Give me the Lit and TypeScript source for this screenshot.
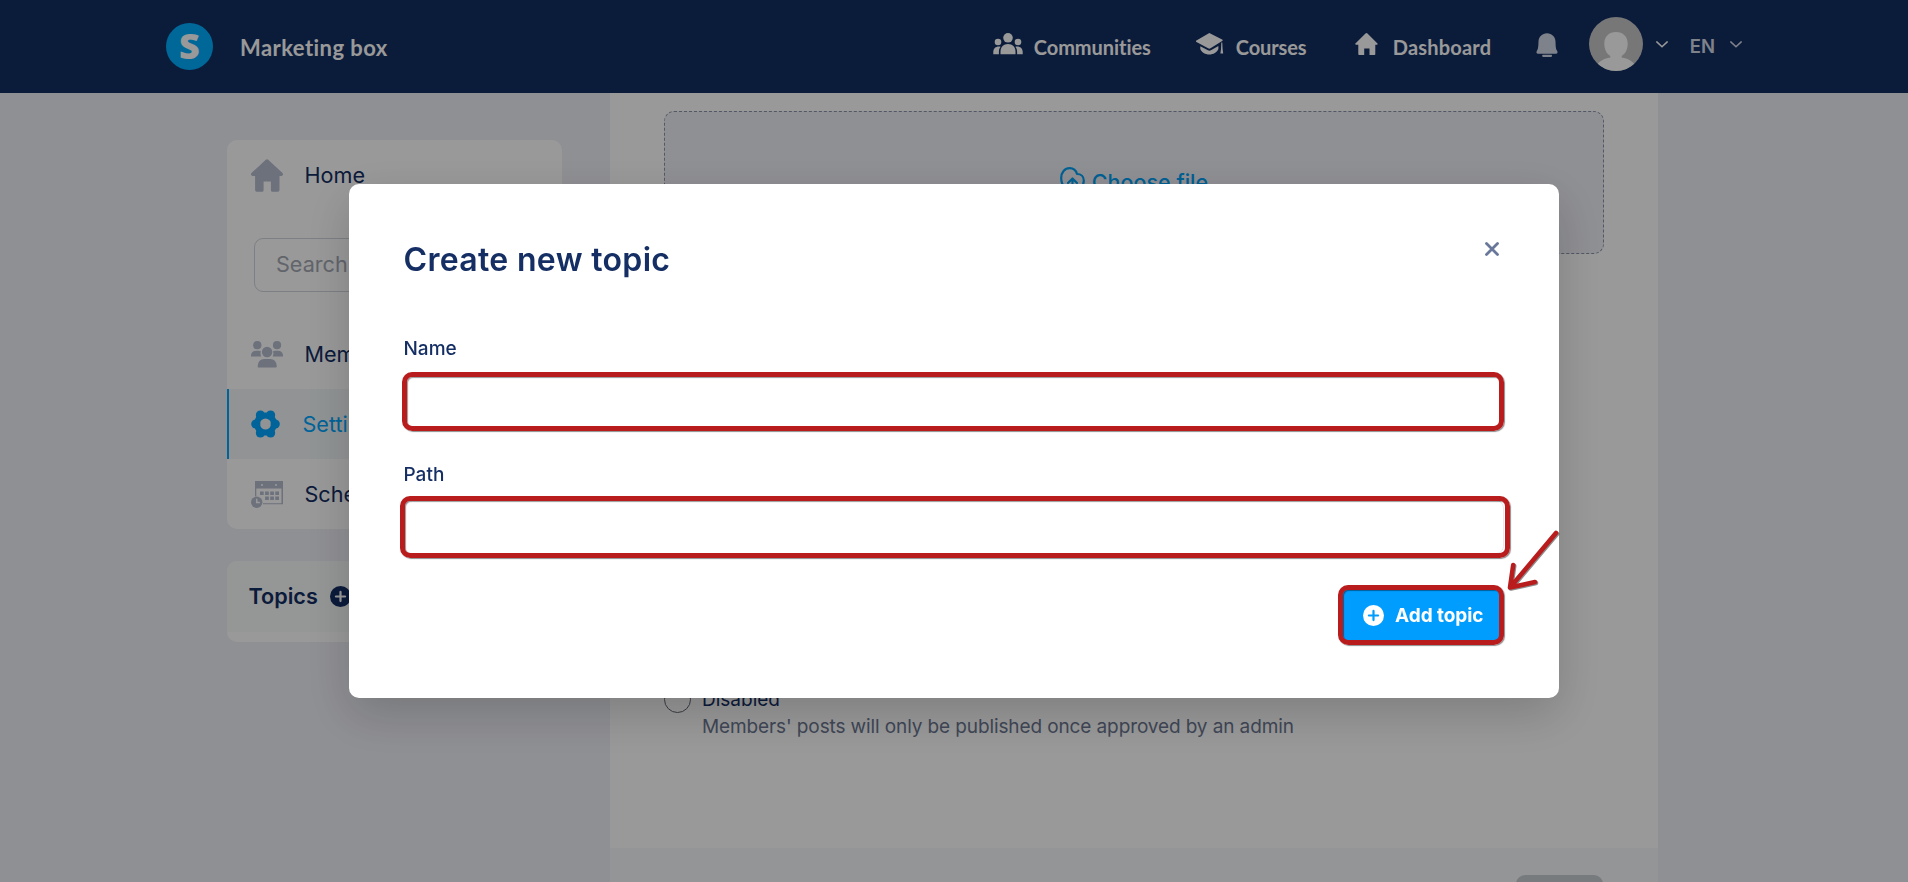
import { LitElement, css, html, svg } from 'lit';
import { customElement } from 'lit/decorators.js';

const icons = {
  communities: svg`
    <svg class="icon" width="30" height="22" viewBox="0 0 30 22">
      <circle cx="15" cy="4.8" r="4.8" />
      <circle cx="5" cy="9" r="3.3" />
      <circle cx="25" cy="9" r="3.3" />
      <path d="M7.5 21.3v-2.6c0-4.7 3-7.7 7.5-7.7s7.5 3 7.5 7.7v2.6z" />
      <path d="M.3 21.3v-2.4c0-3.3 2.2-5.4 5.6-5.4.6 0 1.2.1 1.7.3-1.2 1.5-1.7 3.1-1.7 5v2.5z" />
      <path d="M29.7 21.3v-2.4c0-3.3-2.2-5.4-5.6-5.4-.6 0-1.2.1-1.7.3 1.2 1.5 1.7 3.1 1.7 5v2.5z" />
    </svg>
  `,
  courses: svg`
    <svg class="icon" width="28" height="22" viewBox="0 0 28 22">
      <path d="M13.3 0 26.6 6.8v.9L14.5 15.3q-1.2.7-2.4 0L0 8.7v-.9z" />
      <path d="M4.300 13.300l7.600 4q1.600.8 3 0l7.500-4.300v3c-1.500 3.300-5 5.500-9.100 5.500s-7.700-2.200-9-5.500z" />
      <path d="M25.3 9.5h1l.3 6.5.6 4.5h-2.8l.6-4.5z" />
    </svg>
  `,
  dashboard: svg`
    <svg class="icon" width="23" height="22" viewBox="0 0 23 22">
      <path d="M10.500.4q1-.7 2 0l10 10q.6 1.300-.7 1.300h-1.500v9.500q0 .8-.8.800h-5v-6.500h-5.300V22h-5q-.9 0-.9-.8v-9.500H1.200q-1.400 0-.8-1.300z" />
    </svg>
  `,
  bell: svg`
    <svg class="icon" width="22" height="24" viewBox="0 0 22 24">
      <path d="M11 .3c4.900 0 8.300 3.600 8.500 8.200.2 5 .2 7.500 1.600 9.200.8 1 .6 3-1.100 3H2c-1.700 0-1.900-2-1.100-3 1.400-1.700 1.400-4.200 1.600-9.200C2.700 3.900 6.100.3 11 .3z" />
      <rect x="6.2" y="21.7" width="9.8" height="2.2" rx=".8" />
    </svg>
  `,
  avatar: svg`
    <svg class="avatar" width="54" height="54" viewBox="0 0 54 54">
      <defs>
        <clipPath id="round"><circle cx="27" cy="27" r="27" /></clipPath>
      </defs>
      <g clip-path="url(#round)">
        <rect width="54" height="54" fill="#c6c6c6" />
        <path
          fill="#fff"
          d="M27 15c7 0 11.700 4.600 11.700 11.500 0 6-2.400 10.300-6 12.500v1.500c6.500 1 10.800 3.500 13.300 7.500V56H8v-8c2.500-4 6.800-6.500 13.300-7.500V39c-3.600-2.200-6-6.500-6-12.500C15.300 19.600 20 15 27 15z"
        />
      </g>
    </svg>
  `,
  chevron: svg`
    <svg class="chevron" width="12" height="7" viewBox="0 0 12 7">
      <path d="M.8.9 6 5.800 11.200.9" fill="none" stroke="currentColor" stroke-width="1.5" stroke-linecap="round" />
    </svg>
  `,
  home: svg`
    <svg class="icon" width="32" height="33" viewBox="0 0 32 33">
      <path d="M14.800.7q1.200-1 2.400 0L31.500 14q.8 1 .3 2.100-.5.900-1.700.9h-1.600v14q0 1.700-1.700 1.700h-5.400q-1.500 0-1.500-1.500v-8.700h-7.300v8.700q0 1.500-1.500 1.500H5.600q-1.500 0-1.500-1.700V17H1.900Q.7 17 .2 16.100-.3 15 .5 14z" />
    </svg>
  `,
  members: svg`
    <svg class="icon" width="32" height="27" viewBox="0 0 32 27">
      <circle cx="6.3" cy="4.2" r="4.1" />
      <circle cx="26" cy="4.2" r="4.1" />
      <circle cx="16.1" cy="11" r="5.2" />
      <path d="M0 15.500v-1.200q.5-4.300 5-4.500h3q1 0 1.900.5-1 3 .4 5.200z" />
      <path d="M32 15.500v-1.200q-.5-4.300-5-4.500h-3q-1 0-1.900.5 1 3-.4 5.200z" />
      <path d="M6.800 26.500v-2q.5-6 6.400-6.400h6q5.900.4 6.500 6.400v1q0 1-1 1z" />
    </svg>
  `,
  settings: svg`
    <svg class="icon gear" width="29" height="28" viewBox="0 0 29 28">
      <circle cx="14.5" cy="14" r="8.5" fill="none" stroke="currentColor" stroke-width="6" />
      <g fill="currentColor">
        <circle cx="9.4" cy="5" r="4.6" />
        <circle cx="19.6" cy="5" r="4.6" />
        <circle cx="24.2" cy="14" r="4.6" />
        <circle cx="19.6" cy="23" r="4.6" />
        <circle cx="9.4" cy="23" r="4.6" />
        <circle cx="4.8" cy="14" r="4.6" />
      </g>
    </svg>
  `,
  schedule: svg`
    <svg class="icon" width="32" height="27" viewBox="0 0 32 27">
      <path fill-rule="evenodd" d="M4 0h28v23.200H12v-1h18.500V7.600H5.300v7.500L4 15.600zM11 3a1 1 0 1 0 0 2 1 1 0 0 0 0-2zM25 3a1 1 0 1 0 0 2 1 1 0 0 0 0-2z" />
      <path d="M9 10.400h3.700v3.500H9zM14.100 10.400h3.700v3.500h-3.700zM19.200 10.400h3.700v3.500h-3.700zM24.300 10.400H28v3.500h-3.700zM14.100 15.600h3.700v3.500h-3.700zM19.200 15.600h3.700v3.500h-3.700zM24.300 15.600H28v3.500h-3.700z" />
      <circle cx="5.7" cy="21.3" r="5.7" />
      <path d="M5.700 17.800v3.700h3.200" fill="none" stroke="#fff" stroke-width="1.5" />
    </svg>
  `,
  plus: svg`
    <svg class="plus" width="21" height="21" viewBox="0 0 21 21">
      <circle cx="10.5" cy="10.5" r="10.5" fill="currentColor" />
      <path class="cross" d="M10.500 5.900v9.200M5.900 10.500h9.200" stroke-width="2.2" stroke-linecap="round" />
    </svg>
  `,
  upload: svg`
    <svg width="25" height="26" viewBox="0 0 25 26" fill="none" stroke="currentColor" stroke-width="2.2" stroke-linecap="round" stroke-linejoin="round">
      <path d="M4.500 19.500C2 17.500 1.200 14 1.200 11c0-5.500 3.500-9.800 8.500-9.800 4 0 6.300 2.300 7.300 5.800 4 0 6.800 2.500 6.800 6.500 0 3-1 5-2.800 6.500" />
      <path d="M12.500 24V11.500M8 16l4.500-4.500L17 16" />
    </svg>
  `,
  close: svg`
    <svg width="14" height="14" viewBox="0 0 14 14">
      <path d="M1.500 1.500l11 11M12.500 1.500l-11 11" stroke="currentColor" stroke-width="2.8" stroke-linecap="round" />
    </svg>
  `,
};

@customElement('app-header')
export class AppHeaderEl extends LitElement {
  static override styles = css`
    :host {
      display: flex;
      align-items: center;
      height: 93px;
      padding: 0 166px;
      box-sizing: border-box;
      background: #132d62;
      color: #fff;
      font-family: Lato, 'Noto Sans', sans-serif;
      font-weight: 700;
      font-variant-ligatures: none;
    }
    svg {
      display: block;
    }
    .icon {
      fill: currentColor;
    }
    .logo {
      width: 47px;
      height: 47px;
      border-radius: 50%;
      background: #00adff;
      font: 800 36px/46px 'Open Sans', sans-serif;
      text-align: center;
    }
    .brand {
      margin: 2px 0 0 27px;
      font-size: 22px;
      letter-spacing: 0.45px;
    }
    nav {
      display: flex;
      align-items: center;
      margin-left: auto;
    }
    .link {
      display: flex;
      align-items: center;
      gap: 12px;
      font-size: 20px;
    }
    .link .icon {
      margin-top: -5px;
    }
    .link span {
      margin-left: -1px;
    }
    .communities {
      width: 203px;
      letter-spacing: -0.05px;
    }
    .courses {
      width: 159px;
      gap: 13px;
      letter-spacing: -0.1px;
    }
    .dashboard {
      width: 181px;
      gap: 16px;
      letter-spacing: 0.2px;
    }
    .bell {
      width: 53px;
      color: #d3dae8;
      margin-top: -4px;
    }
    .avatar {
      margin: -5px 13px 0 0;
    }
    .chevron {
      margin-top: -5px;
    }
    .lang {
      display: flex;
      align-items: center;
      gap: 15px;
      margin-left: 22px;
      color: #d3dae8;
      font: 600 18.5px/24px Inter, sans-serif;
    }
    .lang span {
      margin-top: -2px;
    }
  `;

  override render() {
    return html`
      <div class="logo">S</div>
      <span class="brand">Marketing box</span>
      <nav>
        <a class="link communities">${icons.communities}<span>Communities</span></a>
        <a class="link courses">${icons.courses}<span>Courses</span></a>
        <a class="link dashboard">${icons.dashboard}<span>Dashboard</span></a>
        <div class="bell">${icons.bell}</div>
        ${icons.avatar} ${icons.chevron}
        <div class="lang"><span>EN</span>${icons.chevron}</div>
      </nav>
    `;
  }
}

@customElement('app-sidebar')
export class AppSidebarEl extends LitElement {
  static override styles = css`
    :host {
      display: block;
      width: 335px;
      color: #132d62;
      font-size: 21.6px;
    }
    svg {
      display: block;
    }
    .card {
      overflow: hidden;
      border-radius: 10px;
      background: #fff;
    }
    .item {
      display: grid;
      grid-template-columns: 53.5px 1fr;
      align-items: center;
      height: 70px;
      padding-left: 24px;
    }
    .icon {
      fill: #b4bccf;
    }
    .icon.gear {
      fill: none;
    }
    .item.active {
      grid-template-columns: 51.5px 1fr;
      padding-left: 22px;
      border-left: 2px solid #00a6ff;
      background: #f2f6f8;
      color: #00a6ff;
    }
    .search {
      height: 54px;
      margin: 28px 27px 27px;
      padding-left: 21px;
      box-sizing: border-box;
      border: 1px solid #cfd4dc;
      border-radius: 9px;
      color: #a3a8b3;
      line-height: 50px;
    }
    .item span,
    .topics span {
      margin-top: -1px;
    }
    .topics {
      margin-top: 32px;
      padding-bottom: 10px;
    }
    .topics header {
      display: flex;
      align-items: center;
      gap: 12px;
      height: 71px;
      padding-left: 21.5px;
      background: #f8fafa;
      font-weight: 600;
    }
    .cross {
      stroke: #fff;
    }
  `;

  override render() {
    return html`
      <div class="card">
        <div class="item">${icons.home}<span>Home</span></div>
        <div class="search">Search</div>
        <div class="item">${icons.members}<span>Members</span></div>
        <div class="item active">${icons.settings}<span>Settings</span></div>
        <div class="item">${icons.schedule}<span>Scheduler</span></div>
      </div>
      <div class="card topics">
        <header><span>Topics</span>${icons.plus}</header>
      </div>
    `;
  }
}

@customElement('topic-dialog')
export class TopicDialogEl extends LitElement {
  static override styles = css`
    :host {
      position: relative;
      display: block;
      width: 1210px;
      height: 514px;
      padding: 55px;
      box-sizing: border-box;
      border-radius: 10px;
      background: #fff;
      box-shadow: 0 16px 48px rgba(0, 0, 0, 0.18);
      color: #152f64;
    }
    svg {
      display: block;
    }
    header {
      display: flex;
      justify-content: space-between;
      height: 40px;
      margin-bottom: 58px;
    }
    h2 {
      margin: 1px 0 0 -0.5px;
      font-size: 32px;
      font-weight: 600;
      line-height: 40px;
      letter-spacing: 0.33px;
    }
    .close {
      margin: 3px 5px 0 0;
      color: #68779a;
    }
    label {
      display: block;
      margin-left: -0.5px;
      font-size: 19px;
      font-weight: 500;
      line-height: 24px;
    }
    .field {
      position: relative;
      height: 54px;
      margin: 13px 0 35px;
    }
    .field.last {
      margin-bottom: 34px;
    }
    .field input {
      display: block;
      width: 100%;
      height: 100%;
      box-sizing: border-box;
      border: 1px solid #e6e9ee;
      border-radius: 8px;
      outline: none;
    }
    .actions {
      display: flex;
      justify-content: flex-end;
    }
    .submit {
      position: relative;
      display: flex;
      align-items: center;
      gap: 11px;
      width: 162px;
      height: 54px;
      padding-left: 21px;
      box-sizing: border-box;
      border-radius: 8px;
      background: #009dff;
      color: #fff;
      font-size: 19px;
      font-weight: 700;
      letter-spacing: -0.05px;
      white-space: nowrap;
    }
    .cross {
      stroke: #009dff;
    }
    /* red outlines and the arrow sit on top of the controls */
    .mark {
      position: absolute;
      inset: -2px 0 -3px -2px;
      border: 5px solid #b91c1c;
      border-radius: 10px;
      box-shadow:
        1px 1px 1px rgba(0, 0, 0, 0.45),
        inset 1px 1px 1px rgba(0, 0, 0, 0.4);
    }
    .mark.wide {
      inset: -4px -6px -4px -4px;
    }
    .submit .mark {
      inset: -3px 0 -3px -4px;
    }
    .arrow {
      position: absolute;
      top: 339px;
      right: 0;
      filter: drop-shadow(1px 1px 0.5px rgba(0, 0, 0, 0.45));
    }
  `;

  override render() {
    return html`
      <header>
        <h2>Create new topic</h2>
        <div class="close">${icons.close}</div>
      </header>
      <label>Name</label>
      <div class="field"><input type="text" /><i class="mark"></i></div>
      <label>Path</label>
      <div class="field last"><input type="text" /><i class="mark wide"></i></div>
      <div class="actions">
        <div class="submit">
          ${icons.plus}<span>Add topic</span><i class="mark"></i>
        </div>
      </div>
      <svg class="arrow" width="56" height="72" viewBox="0 0 56 72">
        <path
          d="M53 10 7.500 64M10.200 42 7 64.500 32 59"
          fill="none"
          stroke="#b91c1c"
          stroke-width="4.6"
          stroke-linecap="round"
          stroke-linejoin="round"
        />
      </svg>
    `;
  }
}

@customElement('app-root')
export class AppRootEl extends LitElement {
  static override styles = css`
    :host {
      display: block;
      height: 882px;
      overflow: hidden;
      background: #eff0f6;
      color: #132d62;
      font-family: Inter, sans-serif;
      font-size: 19px;
    }
    .page {
      display: grid;
      grid-template-columns: 335px 1048px;
      gap: 48px;
      height: 789px;
      padding-left: 227px;
      overflow: hidden;
    }
    app-sidebar {
      margin-top: 47px;
    }
    .panel {
      display: flex;
      flex-direction: column;
      background: #fff;
    }
    .content {
      display: flex;
      flex-direction: column;
      justify-content: space-between;
      height: 755px;
      padding: 18px 54px 108px;
      box-sizing: border-box;
    }
    .dropzone {
      display: flex;
      justify-content: center;
      gap: 7px;
      height: 143px;
      padding-top: 55px;
      box-sizing: border-box;
      border: 1px dashed #8b93a8;
      border-radius: 10px;
      background: #eff0f6;
      color: #00a0f5;
      font-size: 21.5px;
      font-weight: 500;
      line-height: 31px;
    }
    .option {
      display: grid;
      grid-template-columns: 27px 1fr;
      column-gap: 11px;
      line-height: 27px;
    }
    .radio {
      width: 27px;
      height: 27px;
      box-sizing: border-box;
      border: 1.5px solid #5f6470;
      border-radius: 50%;
    }
    .hint {
      grid-column: 2;
      color: #6b7690;
      letter-spacing: -0.11px;
    }
    .footer {
      display: flex;
      justify-content: flex-end;
      height: 80px;
      flex: none;
      padding: 27px 55px 0;
      box-sizing: border-box;
      background: #f7f8fa;
    }
    .save {
      width: 87px;
      height: 53px;
      border-radius: 9px;
      background: #c6cdd2;
    }
    .backdrop {
      position: fixed;
      inset: 0;
      display: flex;
      align-items: center;
      justify-content: center;
      background: rgba(0, 0, 0, 0.4);
    }
  `;

  override render() {
    return html`
      <app-header></app-header>
      <div class="page">
        <app-sidebar></app-sidebar>
        <main class="panel">
          <div class="content">
            <div class="dropzone">${icons.upload}<span>Choose file</span></div>
            <div class="option">
              <span class="radio"></span>
              <span>Disabled</span>
              <span class="hint">
                Members' posts will only be published once approved by an admin
              </span>
            </div>
          </div>
          <div class="footer"><div class="save"></div></div>
        </main>
      </div>
      <div class="backdrop"><topic-dialog></topic-dialog></div>
    `;
  }
}

declare global {
  interface HTMLElementTagNameMap {
    'app-header': AppHeaderEl;
    'app-sidebar': AppSidebarEl;
    'topic-dialog': TopicDialogEl;
    'app-root': AppRootEl;
  }
}
